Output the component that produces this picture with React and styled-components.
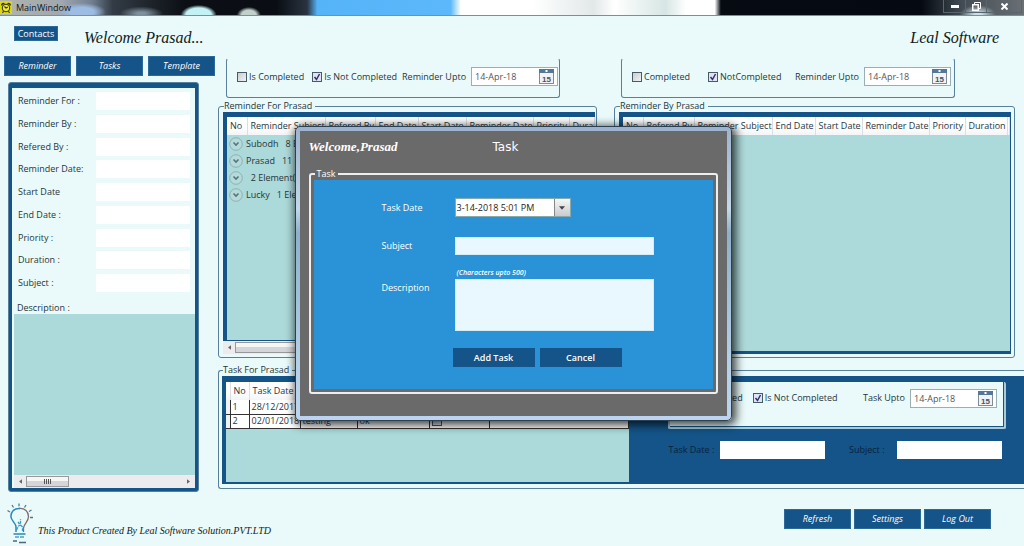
import React from "react";
import styled, { createGlobalStyle, css } from "styled-components";

const c = {
  page: "#eafafa",
  navy: "#145488",
  teal: "#acd9d9",
  line: "#56809c",
  ink: "#26363c",
  gray: "#6a6a6a",
  blue: "#2a92d6",
};

const Global = createGlobalStyle`
  *, *::before, *::after { box-sizing: border-box; }
  body {
    margin: 0;
    background: ${c.page};
    color: ${c.ink};
    font: 9px/12px "Open Sans", "Noto Sans", sans-serif;
  }
  button, input, textarea { font: inherit; color: inherit; margin: 0; border-radius: 0; }
  fieldset { margin: 0; min-width: 0; }
`;

const script = css`
  font-family: "Monotype Corsiva", "Liberation Serif", serif;
  font-style: italic;
`;

const Window = styled.div`
  display: flex;
  flex-direction: column;
  min-height: 100vh;
  overflow: hidden;
`;

const TitleBar = styled.header`
  display: flex;
  align-items: center;
  gap: 4px;
  height: 16px;
  border-bottom: 1px solid #7e8e94;
  color: #10181c;
  background:
    radial-gradient(ellipse 18px 10px at 19.4% 100%, #c4f2f4 70%, transparent),
    radial-gradient(ellipse 12px 8px at 24.3% 100%, #c2d0cc 60%, transparent),
    radial-gradient(ellipse 22px 7px at 13.8% 90%, #7d8e9c 20%, transparent),
    radial-gradient(ellipse 24px 9px at 8% 80%, #9dbce4 50%, transparent),
    radial-gradient(ellipse 18px 10px at 95.5% 100%, #c8e0e8 20%, transparent),
    linear-gradient(90deg, #b0b4ac 0, #a0a8b0 6%, #707e90 9%, #333c46 11%, #1c2228 15%, #0c1016 18%, #0a0e14 27%, #2a3440 30%,
      #55b3f8 31%, #5cb8fa 44%, #fff 45%, #fff 52%, #e2e8e8 58%, #fff 60%, #d6e6e4 65%, #fff 67%, #fff 69.800%, #060b12 70.400%, #050a12 90%, #434c54 94%, #6a7074 100%);
`;

const Title = styled.h1`
  flex: 1;
  margin: 0;
  font-size: 9px;
  font-weight: 400;
`;

const WindowButtons = styled.div`
  display: flex;
  align-self: stretch;
  height: 13px;
  margin-right: 2px;
  border: 1px solid #59646c;
  border-top: 0;
`;

const WindowButton = styled.button`
  display: grid;
  place-items: center;
  width: ${(p) => (p.$wide ? 35 : 21)}px;
  padding: 0;
  border: 0;
  border-left: 1px solid #59646c;
  background: transparent;
  color: #fff;
  &:first-child { border-left: 0; }
`;

const Banner = styled.div`
  display: flex;
  align-items: center;
  height: 40px;
  padding: 0 25px 0 14px;
`;

const ContactsButton = styled.button`
  width: 44px;
  height: 15px;
  margin: 0 26px 5px 0;
  padding: 0;
  border: 1px solid #2c6a98;
  background: ${c.navy};
  color: #fff;
  line-height: 12px;
`;

const ScriptHeading = styled.h2`
  ${script}
  margin: 4px 0 0;
  color: #101c20;
  font-size: 16px;
  line-height: 20px;
  font-weight: 400;
  & + & { margin-left: auto; }
`;

const NavButton = styled.button`
  width: 67px;
  height: 20px;
  padding: 0;
  border: 1px solid #2c6898;
  background: ${c.navy};
  color: #fff;
  font-style: italic;
`;

const Main = styled.main`
  display: flex;
  flex: 1;
  gap: 3px;
`;

const Sidebar = styled.aside`
  display: flex;
  flex-direction: column;
  flex: none;
  width: 215px;
  margin-bottom: -3px;
  padding-left: 4px;
`;

const Tabs = styled.nav`
  display: flex;
  gap: 5px;
`;

const DetailFrame = styled.form`
  display: flex;
  flex-direction: column;
  flex: 1;
  width: 191px;
  margin: 6px 0 0 4px;
  border: 1px solid ${c.line};
  border-radius: 3px;
  background: ${c.navy};
  padding: 5px 3px 3px;
`;

const DetailBody = styled.div`
  display: flex;
  flex-direction: column;
  flex: 1;
  padding: 4px 0 0 2px;
  background: ${c.page};
`;

const FieldList = styled.div`
  display: grid;
  align-content: space-between;
  height: 200px;
  padding: 0 5px 0 4px;
`;

const FieldRow = styled.div`
  display: grid;
  grid-template-columns: 78px 1fr;
  align-items: center;
`;

const PlainInput = styled.input`
  width: 100%;
  height: 18px;
  padding: 0 4px;
  border: 0;
  background: #fff;
`;

const DescriptionLabel = styled.label`
  margin: 10px 0 0 3px;
`;

const TealArea = styled.textarea`
  display: block;
  flex: 1;
  width: 100%;
  min-height: 60px;
  padding: 4px;
  border: 0;
  background: ${c.teal};
  resize: none;
`;

const ScrollTrack = styled.div`
  display: flex;
  align-items: center;
  height: 13px;
  flex: none;
  padding: 0 5px;
  gap: 4px;
  background: #ececee;
  color: #444;
`;

const ScrollThumb = styled.div`
  display: grid;
  place-items: center;
  width: ${(p) => (p.$long ? "calc(100% - 20px)" : "43px")};
  height: 11px;
  border: 1px solid #999;
  background: linear-gradient(#f6f6f6 45%, #d4d5d8 50%);
`;

const Spacer = styled.span`
  flex: 1;
`;

const Work = styled.div`
  display: flex;
  flex-direction: column;
  flex: 1;
  min-width: 0;
`;

const Columns = styled.div`
  display: grid;
  grid-template-columns: 379fr 401fr;
  gap: 17px;
  flex: 1;
  padding-right: 9px;
`;

const Column = styled.section`
  display: flex;
  flex-direction: column;
  min-width: 0;
`;

const FilterBox = styled.div`
  display: flex;
  align-items: center;
  width: 334px;
  height: 40px;
  margin: 2px 0 2px ${(p) => p.$indent || 8}px;
  padding: 0 3px 3px 10px;
  border: 1px solid ${c.line};
  border-top-color: transparent;
  border-radius: 3px;
`;

const CheckLabel = styled.label`
  display: inline-flex;
  align-items: center;
  gap: 2px;
  margin-right: ${(p) => p.$after}px;
  white-space: nowrap;
`;

const Check = styled.input.attrs({ type: "checkbox" })`
  appearance: none;
  flex: none;
  width: 10px;
  height: 10px;
  border: 1px solid #455c66;
  background: linear-gradient(135deg, #c8ccd4, #f2f2f4);
  &:checked {
    background: #e0e3f4
      url("data:image/svg+xml,%3Csvg xmlns='http://www.w3.org/2000/svg' viewBox='0 0 8 8'%3E%3Cpath d='M1.5 4l2 2.5L6.5 1' fill='none' stroke='%23303070' stroke-width='1.5'/%3E%3C/svg%3E");
  }
`;

const UptoLabel = styled.label`
  margin: 0 5px 0 auto;
  white-space: nowrap;
`;

const DateField = styled.div`
  display: flex;
  align-items: center;
  flex: none;
  width: 87px;
  height: 19px;
  padding: 0 3px;
  border: 1px solid #9aafb4;
  background: #fff;
  color: #555;
`;

const BareInput = styled.input`
  flex: 1;
  min-width: 0;
  height: 100%;
  padding: 0;
  border: 0;
  background: transparent;
  outline: 0;
`;

const IconButton = styled.button`
  display: grid;
  place-items: center;
  flex: none;
  padding: 0;
  border: 0;
  background: transparent;
`;

const Group = styled.fieldset`
  display: flex;
  flex-direction: column;
  flex: 1;
  padding: 0 ${(p) => p.$right}px 3px 4px;
  border: 1px solid ${c.line};
  border-radius: 3px;
`;

const Legend = styled.legend`
  margin-left: 1px;
  padding: 0 3px 0 0;
  line-height: 12px;
`;

const GridFrame = styled.div`
  display: flex;
  flex-direction: column;
  flex: 1;
  min-width: 0;
  overflow: hidden;
  border: solid ${c.navy};
  border-width: 5px ${(p) => p.$right}px ${(p) => p.$bottom}px 4px;
  background: ${c.teal};
`;

const Grid = styled.table`
  width: 100%;
  table-layout: fixed;
  border-collapse: collapse;
  th, td { padding: 0; text-align: left; font-weight: 400; white-space: nowrap; overflow: hidden; }
  th {
    height: 18px;
    padding-left: 3px;
    border-right: 1px solid #dcdfe2;
    background: linear-gradient(#fff 50%, #f2f4f6);
  }
`;

const GroupCell = styled.td`
  height: 17px;
`;

const Expander = styled.button`
  display: flex;
  align-items: center;
  gap: 3px;
  padding: 0 0 0 2px;
  border: 0;
  background: transparent;
  white-space: pre;
`;

const TaskGroup = styled.fieldset`
  display: flex;
  flex-direction: column;
  margin: 6px 0 0;
  padding: 0 0 4px 3px;
  border: 1px solid ${c.line};
  border-right: 0;
  border-radius: 3px 0 0 3px;
`;

const TaskPane = styled.div`
  display: flex;
  gap: 39px;
  height: 108px;
  padding: 6px 0 2px 4px;
  background: ${c.navy};
`;

const TaskGrid = styled.div`
  width: 402px;
  flex: 1 1 402px;
  background: ${c.teal};
`;

const TaskTable = styled(Grid)`
  td {
    height: 14px;
    padding: 0 0 0 2px;
    border: 1px solid #333;
    border-top: 0;
    background: #fff;
    line-height: 12px;
  }
  td:first-child { border-left: 0; background: #eef2f4; }
  input { display: block; }
`;

const TaskSide = styled.div`
  flex: 1 1 338px;
  margin-right: 18px;
`;

const TaskFilter = styled.div`
  display: flex;
  align-items: center;
  height: 47px;
  padding: 0 7px 13px 6px;
  border: solid #a9cbd8;
  border-width: 0 2px 2px;
  border-radius: 2px;
  box-shadow: inset -1px -1px 0 ${c.navy};
  background: ${c.page};
`;

const TaskFields = styled.div`
  display: flex;
  align-items: center;
  justify-content: space-between;
  margin: 12px 4px 0 1px;
  color: #08233c;
`;

const LabeledInput = styled.div`
  display: grid;
  grid-template-columns: ${(p) => p.$label}px 105px;
  align-items: center;
`;

const Footer = styled.footer`
  display: flex;
  align-items: flex-start;
  height: 57px;
  padding: 14px 33px 0 7px;
`;

const Credit = styled.p`
  ${script}
  flex: 1;
  margin: 22px 0 0 4px;
  color: #101c20;
  font-size: 10px;
  line-height: 12px;
`;

const FooterActions = styled.div`
  display: flex;
  gap: 3px;
  margin-top: 6px;
`;

const Overlay = styled.div`
  position: fixed;
  inset: 0;
  display: grid;
  place-items: center;
  padding: 1px 0 0 2px;
`;

const Dialog = styled.section`
  width: 437px;
  padding: 4px;
  border: 1px solid #2b4050;
  border-radius: 5px;
  background: linear-gradient(#9db2cc, #c3d8ea 28%, #8fb0cc 36%, #b4d0e6 80%, #bcd4f0);
  box-shadow: 2px 2px 10px 2px rgba(0, 0, 0, 0.75);
`;

const DialogBody = styled.div`
  padding: 9px 9px 22px;
  background: ${c.gray};
  color: #fff;
`;

const DialogHeader = styled.div`
  display: grid;
  grid-template-columns: 184px 1fr;
  align-items: center;
`;

const DialogUser = styled.strong`
  ${script}
  font-size: 13px;
  line-height: 14px;
`;

const DialogTitle = styled.h2`
  margin: 0;
  font-family: "Segoe Print", "DejaVu Sans", sans-serif;
  font-size: 12px;
  line-height: 14px;
  font-weight: 400;
`;

const DialogGroup = styled.fieldset`
  margin-top: 14px;
  padding: 0 3px 3px;
  border: 2px solid #eee;
  border-radius: 3px;
`;

const DialogLegend = styled.legend`
  margin-left: 1px;
  padding: 0 3px 0 2px;
  line-height: 12px;
`;

const TaskForm = styled.form`
  padding: 18px 59px 22px 68px;
  background: ${c.blue};
`;

const FormRow = styled.div`
  display: grid;
  grid-template-columns: 73px 1fr;
  align-items: ${(p) => (p.$top ? "start" : "center")};
  margin-bottom: ${(p) => p.$after}px;
`;

const Combo = styled.div`
  display: flex;
  width: 116px;
  height: 19px;
  padding-left: 1px;
  border: 1px solid #8aa;
  background: #fff;
  color: #222;
`;

const ComboButton = styled(IconButton)`
  width: 16px;
  border-left: 1px solid #888;
  background: linear-gradient(#f6f6f6, #c8ccd0);
`;

const FormInput = styled.input`
  height: 18px;
  padding: 0 4px;
  border: 1px solid #d4ecf4;
  background: #e9f8fe;
  color: #222;
`;

const FormArea = styled.textarea`
  display: block;
  height: 52px;
  padding: 4px;
  border: 1px solid #d4ecf4;
  background: #e9f8fe;
  color: #222;
  resize: none;
`;

const Hint = styled.small`
  display: block;
  margin: 0 0 1px 75px;
  font-size: 7px;
  line-height: 10px;
  font-style: italic;
  font-weight: 600;
`;

const AreaLabel = styled.label`
  margin-top: 3px;
`;

const FormActions = styled.div`
  display: flex;
  gap: 5px;
  margin: 17px 0 0 71px;
`;

const FormButton = styled.button`
  width: 82px;
  height: 19px;
  padding: 0;
  border: 0;
  background: ${c.navy};
  color: #fff;
  font-weight: 600;
`;

const AlarmIcon = () => (
  <svg width="12" height="13" viewBox="0 0 12 13" aria-hidden="true">
    <rect width="12" height="13" fill="#d9d818" />
    <path d="M1.800 4.500C1.500 2.500 3.500 2 4.300 3M10.200 4.500C10.500 2.500 8.500 2 7.700 3" fill="none" stroke="#33300a" strokeWidth="1.500" />
    <circle cx="6" cy="7" r="3.800" fill="#eee830" stroke="#33300a" strokeWidth="1" />
    <path d="M3.500 10.300 2.500 12M8.500 10.300l1 1.700M4.500 5.500 6 7l1.800-1" fill="none" stroke="#33300a" strokeWidth="1.100" />
  </svg>
);

const CalendarIcon = () => (
  <svg width="15" height="15" viewBox="0 0 15 15" aria-hidden="true">
    <rect x=".5" y="1" width="14" height="13.500" fill="#f1f3f6" stroke="#7d8c98" />
    <rect x="0" y="0" width="15" height="4" fill="#52799a" />
    <rect x="6.500" y="1" width="2" height="2" fill="#fff" />
    <text x="7.500" y="12.500" textAnchor="middle" fontFamily="Liberation Sans" fontWeight="700" fontSize="8" fill="#4a525c">15</text>
  </svg>
);

const ChevronCircle = () => (
  <svg width="14" height="14" viewBox="0 0 14 14" aria-hidden="true">
    <circle cx="7" cy="7" r="6.300" fill="#b5dada" stroke="#8fb0b4" />
    <path d="m4.500 5.500 2.500 2.500 2.500-2.500" fill="none" stroke="#55757e" strokeWidth="1.600" />
  </svg>
);

const Arrow = ({ d }) => (
  <svg width="3" height="5" viewBox="0 0 4 6" aria-hidden="true">
    <path d={d} fill="#666" />
  </svg>
);

const BulbLogo = () => (
  <svg width="27" height="41" viewBox="0 0 27 41" fill="none" aria-hidden="true">
    <path d="M13 5.500C7 5 3.500 9 4 14c.3 4 5 6 5 10v5" stroke="#2789bd" strokeWidth="1.500" />
    <path d="M12 5.500c6-.5 9.500 3 9.500 8 0 5-4 6.500-5 11.500v4" stroke="#806d6c" strokeWidth="1.300" />
    <path d="M.5 7.500 3 9M5 2l1.500 2.500M12 .5v2.800M19 2l-1.500 2.500M24.500 7 22 8.500M23 14.500h3" stroke="#4c7a91" strokeWidth="1.300" />
    <path d="M9.500 27l2-4 2-1v-6M13.500 22l2 2v4M11 19l1.500 2" stroke="#3a9aca" strokeWidth="1.300" strokeDasharray="3 1" />
    <path d="M6.500 31h12" stroke="#2789bd" strokeWidth="1.500" />
    <path d="M8 34h9" stroke="#4f9fc8" strokeWidth="1.500" strokeDasharray="4 1" />
    <path d="M6 38h4M12 39.500h7" stroke="#486b7c" strokeWidth="1.500" />
  </svg>
);

const fields = ["Reminder For :", "Reminder By :", "Refered By :", "Reminder Date:", "Start Date", "End Date :", "Priority :", "Duration :", "Subject :"];

const forColumns = [["No", 20], ["Reminder Subject", 78], ["Refered By", 50], ["End Date", 43], ["Start Date", 48], ["Reminder Date", 67], ["Priority", 36], ["Duration", null]];
const byColumns = [["No", 20], ["Refered By", 51], ["Reminder Subject", 78], ["End Date", 43], ["Start Date", 47], ["Reminder Date", 67], ["Priority", 36], ["Duration", 42], ["", null]];
const groups = ["Subodh   8 Element(s)", "Prasad   11 Element(s)", "  2 Element(s)", "Lucky   1 Element(s)"];

function DatePicker({ id }) {
  return (
    <DateField>
      <BareInput id={id} defaultValue="14-Apr-18" />
      <IconButton type="button" aria-label="Open calendar"><CalendarIcon /></IconButton>
    </DateField>
  );
}

function Head({ columns }) {
  return (
    <>
      <colgroup>
        {columns.map(([name, w], i) => <col key={i} width={w || undefined} />)}
      </colgroup>
      <thead>
        <tr>{columns.map(([name], i) => <th key={i} scope="col">{name}</th>)}</tr>
      </thead>
    </>
  );
}

function TaskDialog() {
  return (
    <Overlay>
      <Dialog role="dialog" aria-labelledby="dialog-title">
        <DialogBody>
          <DialogHeader>
            <DialogUser>Welcome,Prasad</DialogUser>
            <DialogTitle id="dialog-title">Task</DialogTitle>
          </DialogHeader>
          <DialogGroup>
            <DialogLegend>Task</DialogLegend>
            <TaskForm>
              <FormRow $after={20}>
                <label htmlFor="new-date">Task Date</label>
                <Combo>
                  <BareInput id="new-date" defaultValue="3-14-2018 5:01 PM" />
                  <ComboButton type="button" aria-label="Choose date">
                    <svg width="6" height="4" viewBox="0 0 7 4"><path d="M0 0h7L3.500 4z" fill="#444" /></svg>
                  </ComboButton>
                </Combo>
              </FormRow>
              <FormRow $after={13}>
                <label htmlFor="new-subject">Subject</label>
                <FormInput id="new-subject" />
              </FormRow>
              <Hint>(Characters upto 500)</Hint>
              <FormRow $top $after={0}>
                <AreaLabel htmlFor="new-description">Description</AreaLabel>
                <FormArea id="new-description" />
              </FormRow>
              <FormActions>
                <FormButton type="button">Add Task</FormButton>
                <FormButton type="button">Cancel</FormButton>
              </FormActions>
            </TaskForm>
          </DialogGroup>
        </DialogBody>
      </Dialog>
    </Overlay>
  );
}

export default function App() {
  return (
    <Window>
      <Global />
      <TitleBar>
        <AlarmIcon />
        <Title>MainWindow</Title>
        <WindowButtons>
          <WindowButton aria-label="Minimize"><svg width="8" height="3"><rect width="8" height="3" fill="#fff" /></svg></WindowButton>
          <WindowButton aria-label="Restore">
            <svg width="9" height="9" fill="none" stroke="#fff"><path d="M2.500 2.500V.5h6v6h-2" /><rect x=".75" y="2.750" width="5.500" height="5.500" strokeWidth="1.500" /></svg>
          </WindowButton>
          <WindowButton $wide aria-label="Close"><svg width="7" height="7" stroke="#fff" strokeWidth="2"><path d="m.5.5 6 6M6.500.5l-6 6" /></svg></WindowButton>
        </WindowButtons>
      </TitleBar>
      <Banner>
        <ContactsButton type="button">Contacts</ContactsButton>
        <ScriptHeading>Welcome Prasad...</ScriptHeading>
        <ScriptHeading>Leal Software</ScriptHeading>
      </Banner>
      <Main>
        <Sidebar>
          <Tabs>
            <NavButton type="button">Reminder</NavButton>
            <NavButton type="button">Tasks</NavButton>
            <NavButton type="button">Template</NavButton>
          </Tabs>
          <DetailFrame>
            <DetailBody>
              <FieldList>
                {fields.map((name, i) => (
                  <FieldRow key={name}>
                    <label htmlFor={`field-${i}`}>{name}</label>
                    <PlainInput id={`field-${i}`} />
                  </FieldRow>
                ))}
              </FieldList>
              <DescriptionLabel htmlFor="details">Description :</DescriptionLabel>
              <TealArea id="details" />
              <ScrollTrack>
                <Arrow d="M4 0v6L0 3z" />
                <ScrollThumb>
                  <svg width="8" height="5" stroke="#555"><path d="M.5 0v5M2.500 0v5M4.500 0v5M6.500 0v5" /></svg>
                </ScrollThumb>
                <Spacer />
                <Arrow d="M0 0v6l4-3z" />
              </ScrollTrack>
            </DetailBody>
          </DetailFrame>
        </Sidebar>
        <Work>
          <Columns>
            <Column>
              <FilterBox>
                <CheckLabel $after={8}><Check /> Is Completed</CheckLabel>
                <CheckLabel $after={5}><Check defaultChecked /> Is Not Completed</CheckLabel>
                <UptoLabel htmlFor="for-upto">Reminder Upto</UptoLabel>
                <DatePicker id="for-upto" />
              </FilterBox>
              <Group $right={1}>
                <Legend>Reminder For Prasad</Legend>
                <GridFrame $right={0} $bottom={1}>
                  <Grid>
                    <Head columns={forColumns} />
                    <tbody>
                      {groups.map((name) => (
                        <tr key={name}>
                          <GroupCell colSpan={8}>
                            <Expander type="button"><ChevronCircle />{name}</Expander>
                          </GroupCell>
                        </tr>
                      ))}
                    </tbody>
                  </Grid>
                </GridFrame>
                <ScrollTrack>
                  <Arrow d="M4 0v6L0 3z" />
                  <ScrollThumb $long />
                  <Spacer />
                  <Arrow d="M0 0v6l4-3z" />
                </ScrollTrack>
              </Group>
            </Column>
            <Column>
              <FilterBox $indent={7}>
                <CheckLabel $after={18}><Check /> Completed</CheckLabel>
                <CheckLabel $after={6}><Check defaultChecked /> NotCompleted</CheckLabel>
                <UptoLabel htmlFor="by-upto">Reminder Upto</UptoLabel>
                <DatePicker id="by-upto" />
              </FilterBox>
              <Group $right={3}>
                <Legend>Reminder By Prasad</Legend>
                <GridFrame $right={1} $bottom={3}>
                  <Grid><Head columns={byColumns} /></Grid>
                </GridFrame>
              </Group>
            </Column>
          </Columns>
          <TaskGroup>
            <Legend>Task For Prasad</Legend>
            <TaskPane>
              <TaskGrid>
                <TaskTable>
                  <Head columns={[["", 4], ["No", 19], ["Task Date", 51], ["Subject", 57], ["Description", 72], ["Completed", 60], ["", null]]} />
                  <tbody>
                    <tr><td /><td>1</td><td>28/12/2017</td><td>testing</td><td>ok</td><td><Check aria-label="Task 1 completed" /></td><td /></tr>
                    <tr><td /><td>2</td><td>02/01/2018</td><td>testing</td><td>ok</td><td><Check aria-label="Task 2 completed" /></td><td /></tr>
                  </tbody>
                </TaskTable>
              </TaskGrid>
              <TaskSide>
                <TaskFilter>
                  <CheckLabel $after={10}><Check /> Is Completed</CheckLabel>
                  <CheckLabel $after={6}><Check defaultChecked /> Is Not Completed</CheckLabel>
                  <UptoLabel htmlFor="task-upto">Task Upto</UptoLabel>
                  <DatePicker id="task-upto" />
                </TaskFilter>
                <TaskFields>
                  <LabeledInput $label={51}>
                    <label htmlFor="task-date">Task Date :</label>
                    <PlainInput id="task-date" />
                  </LabeledInput>
                  <LabeledInput $label={48}>
                    <label htmlFor="task-subject">Subject :</label>
                    <PlainInput id="task-subject" />
                  </LabeledInput>
                </TaskFields>
              </TaskSide>
            </TaskPane>
          </TaskGroup>
        </Work>
      </Main>
      <Footer>
        <BulbLogo />
        <Credit>This Product Created By Leal Software Solution.PVT.LTD</Credit>
        <FooterActions>
          <NavButton type="button">Refresh</NavButton>
          <NavButton type="button">Settings</NavButton>
          <NavButton type="button">Log Out</NavButton>
        </FooterActions>
      </Footer>
      <TaskDialog />
    </Window>
  );
}
